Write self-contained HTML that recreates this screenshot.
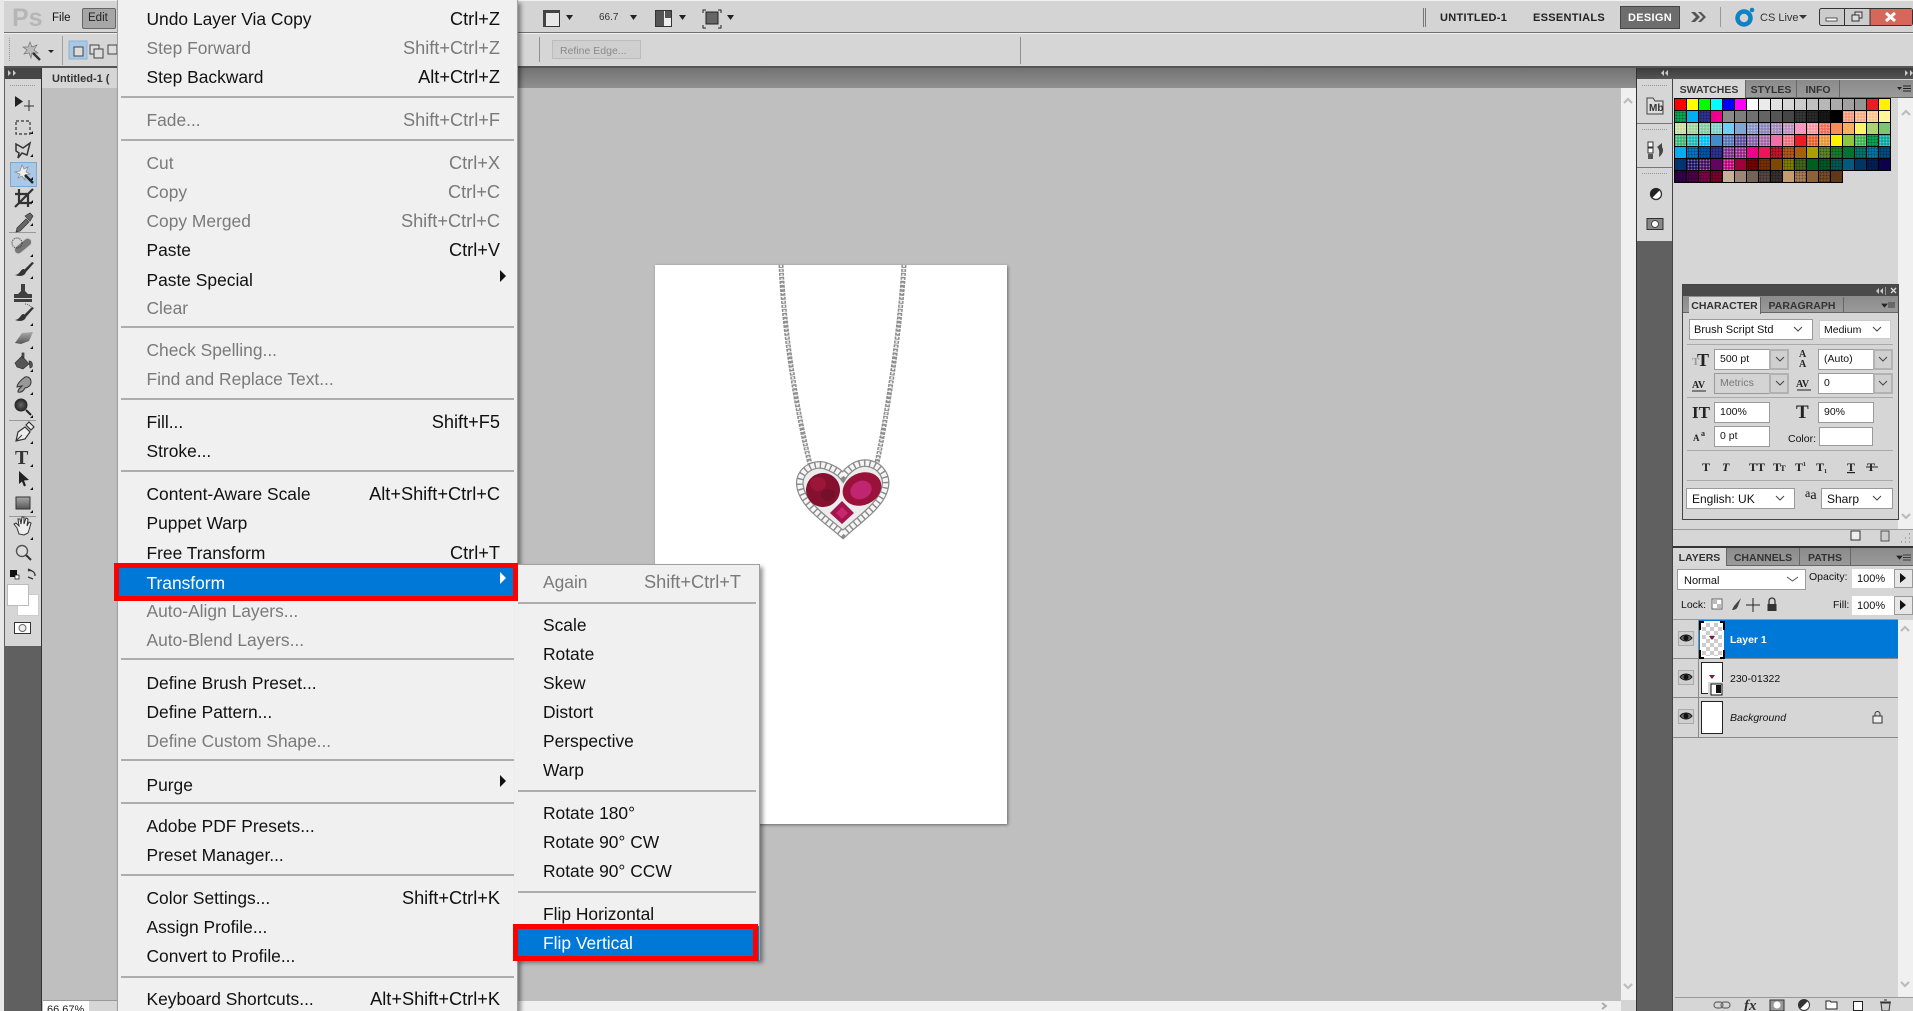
<!DOCTYPE html>
<html><head><meta charset="utf-8"><style>
html,body{margin:0;padding:0;width:1913px;height:1011px;overflow:hidden;background:#d6d6d6}
body{position:relative;font-family:"Liberation Sans",sans-serif;color:#111}
div,svg{position:absolute}
.t{position:absolute;white-space:nowrap;font-size:10.5px;line-height:14px}
#menu,#sub{background:#f0f0f0;box-shadow:3px 3px 4px rgba(0,0,0,.4);font-size:17.4px;color:#111}
.m{position:absolute;height:24px;line-height:24px;white-space:nowrap}
#menu .m{left:28.500px;right:17px}
#sub .m{left:28px;right:18px}
.m b{position:absolute;right:0;top:0;font-weight:normal;font-size:18.200px}
.x{color:#7a7a7a}
.s{position:absolute;height:2px;background:#adadad}
#menu .s{left:3px;right:3px}
#sub .s{left:3px;right:3px}
#sw{left:1675px;top:99px;width:217px;display:grid;grid-template-columns:repeat(18,11px);grid-auto-rows:11px;gap:1px;background:transparent}
#sw i{display:block;background-color:currentColor;box-shadow:0 0 0 1px #000}
#sw i.d{background-image:radial-gradient(rgba(0,0,0,.38) 35%,transparent 45%);background-size:3px 3px}
#sw i.l{background-image:radial-gradient(rgba(255,255,255,.4) 35%,transparent 45%);background-size:3px 3px}
.f{position:absolute;background:#fff;box-sizing:border-box;font-size:10.5px;line-height:19px;padding-left:5px;border:1px solid #9a9a9a;white-space:nowrap}
.ar{position:absolute;background:#d0d0d0;border:2px solid #b2b2b2;box-sizing:border-box}
.tab{position:absolute;font-size:10.5px;font-weight:bold;text-align:center;box-sizing:border-box;color:#333;border-right:1px solid #666}
.tb{background:linear-gradient(#8b8b8b,#9a9a9a)}
</style></head><body>

<!-- menu bar / options -->
<div style="left:0;top:0;width:1913px;height:33px;background:#d4d4d4;border-top:1px solid #f2f2f2;box-sizing:border-box"></div>
<div style="left:0;top:32px;width:1913px;height:1px;background:#707070"></div>
<div style="left:0;top:33px;width:1913px;height:1px;background:#f0f0f0"></div>
<div style="left:0;top:34px;width:1913px;height:32px;background:#d6d6d6"></div>
<div style="left:0;top:66px;width:1913px;height:2px;background:#555"></div>
<div style="left:0;top:0;width:4px;height:1011px;background:#e8e8e8"></div>

<div class="t" style="left:12px;top:4px;font-size:25px;line-height:28px;font-weight:bold;color:#b6b6b6">Ps</div>
<div class="t" style="left:52px;top:11px;font-size:11.5px">File</div>
<div style="left:82px;top:8px;width:32px;height:19px;background:#a6a6a6;border:1px solid #666;border-radius:2px"></div>
<div class="t" style="left:88px;top:11px;font-size:11.5px;color:#222">Edit</div>

<div class="t" style="left:599px;top:11px;font-size:10px;color:#333">66.7</div>
<div class="t" style="left:1440px;top:11px;font-size:11px;font-weight:bold;letter-spacing:.3px;color:#222">UNTITLED-1</div>
<div class="t" style="left:1533px;top:11px;font-size:11px;font-weight:bold;letter-spacing:.3px;color:#222">ESSENTIALS</div>
<div style="left:1620px;top:6px;width:60px;height:23px;background:#6d6d6d;border:1px solid #444;box-sizing:border-box"></div>
<div class="t" style="left:1628px;top:11px;font-size:11px;font-weight:bold;letter-spacing:.3px;color:#fff">DESIGN</div>
<div class="t" style="left:1760px;top:11px;font-size:11px;color:#333">CS Live</div>
<div style="left:552px;top:40px;width:89px;height:19px;background:#cfcfcf;border:1px solid #bcbcbc;box-sizing:border-box"></div>
<div class="t" style="left:560px;top:44px;font-size:10.5px;color:#8a8a8a">Refine Edge...</div>
<div style="left:539px;top:37px;width:1px;height:25px;background:#8f8f8f"></div>
<div style="left:1020px;top:37px;width:1px;height:27px;background:#8f8f8f"></div>
<div style="left:62px;top:36px;width:1px;height:29px;background:#a0a0a0"></div>

<!-- tab row + canvas -->
<div style="left:42px;top:68px;width:1595px;height:20px;background:linear-gradient(#727272,#909090)"></div>
<div style="left:42px;top:68px;width:90px;height:20px;background:#d6d6d6"></div>
<div class="t" style="left:52px;top:72px;font-size:11px;font-weight:bold;color:#333">Untitled-1 (</div>
<div style="left:42px;top:88px;width:1579px;height:923px;background:#bfbfbf"></div>
<div style="left:655px;top:265px;width:352px;height:559px;background:#fff;box-shadow:1px 1px 3px rgba(0,0,0,.45)"></div>
<div style="left:1621px;top:88px;width:16px;height:912px;background:#f0f0f0"></div>
<div style="left:1621px;top:1000px;width:16px;height:11px;background:#d4d4d4"></div>
<div style="left:518px;top:1001px;width:1103px;height:10px;background:#f0f0f0"></div>
<div style="left:43px;top:1000px;width:75px;height:11px;background:#d6d6d6;border-top:1px solid #999;box-sizing:border-box"></div>
<div style="left:43px;top:1001px;width:46px;height:10px;background:#fff"></div>
<div class="t" style="left:47px;top:1003px;font-size:11px;color:#222">66.67%</div>

<!-- left tools -->
<div style="left:4px;top:68px;width:37px;height:943px;background:#606060"></div>
<div style="left:5px;top:68px;width:36px;height:11px;background:#454545"></div>
<div style="left:5px;top:79px;width:36px;height:567px;background:#d6d6d6"></div>
<div style="left:41px;top:68px;width:1px;height:943px;background:#333"></div>
<div style="left:9px;top:232px;width:27px;height:1px;background:#999"></div>
<div style="left:9px;top:420px;width:27px;height:1px;background:#999"></div>
<div style="left:9px;top:516px;width:27px;height:1px;background:#999"></div>
<div style="left:10px;top:162px;width:25px;height:23px;background:#a9c8e6;border:1px solid #7fa7cf"></div>
<div style="left:8px;top:585px;width:20px;height:20px;background:#fff;box-shadow:0 0 0 1px #bbb;z-index:2"></div>
<div style="left:18px;top:595px;width:20px;height:20px;background:#fff;box-shadow:0 0 0 1px #ccc"></div>

<!-- right dock -->
<div style="left:1637px;top:68px;width:276px;height:11px;background:linear-gradient(#3b3b3b,#555)"></div>
<div style="left:1637px;top:79px;width:36px;height:932px;background:#606060"></div>
<div style="left:1637px;top:79px;width:36px;height:162px;background:#d6d6d6"></div>
<div style="left:1637px;top:123px;width:36px;height:1px;background:#777"></div>
<div style="left:1637px;top:167px;width:36px;height:1px;background:#777"></div>
<div style="left:1636px;top:68px;width:1px;height:943px;background:#333"></div>
<div style="left:1672px;top:79px;width:1px;height:932px;background:#444"></div>

<!-- swatches panel -->
<div style="left:1673px;top:79px;width:240px;height:467px;background:#d6d6d6"></div>
<div class="tb" style="left:1673px;top:80px;width:240px;height:18px;border-bottom:1px solid #666;box-sizing:border-box"></div>
<div class="tab" style="left:1673px;top:80px;width:73px;height:18px;line-height:21px;background:#d8d8d8;color:#3a3a3a">SWATCHES</div>
<div class="tab" style="left:1746px;top:80px;width:51px;height:17px;line-height:21px">STYLES</div>
<div class="tab" style="left:1797px;top:80px;width:43px;height:17px;line-height:21px">INFO</div>
<div style="left:1898px;top:98px;width:15px;height:431px;background:#f0f0f0"></div>
<div style="left:1673px;top:529px;width:240px;height:1px;background:#999"></div>
<div style="left:1673px;top:546px;width:240px;height:2px;background:#333"></div>

<div id="sw">
<i style="color:#f00"></i><i style="color:#ff0"></i><i style="color:#0f0"></i><i style="color:#0ff"></i><i style="color:#00f"></i><i style="color:#f0f"></i><i style="color:#fff"></i><i style="color:#ebebeb"></i><i style="color:#e1e1e1"></i><i style="color:#d7d7d7"></i><i style="color:#cbcbcb"></i><i style="color:#c0c0c0"></i><i style="color:#b7b7b7"></i><i style="color:#ababab"></i><i style="color:#a1a1a1"></i><i style="color:#959595"></i><i style="color:#ed1c24"></i><i style="color:#fff200"></i>
<i class="d" style="color:#00a651"></i><i style="color:#00aeef"></i><i class="d" style="color:#2e3192"></i><i style="color:#ec008c"></i><i style="color:#898989"></i><i style="color:#7d7d7d"></i><i style="color:#707070"></i><i style="color:#646464"></i><i style="color:#555"></i><i style="color:#464646"></i><i class="d" style="color:#363636"></i><i class="d" style="color:#2a2a2a"></i><i class="d" style="color:#181818"></i><i style="color:#000"></i><i class="l" style="color:#f7977a"></i><i class="l" style="color:#f9ad81"></i><i class="l" style="color:#fdc68a"></i><i style="color:#fff79a"></i>
<i class="l" style="color:#c4df9b"></i><i class="l" style="color:#a2d39c"></i><i class="l" style="color:#82ca9d"></i><i class="l" style="color:#7bcdc8"></i><i style="color:#6ecff6"></i><i style="color:#7ea7d8"></i><i class="l" style="color:#8493ca"></i><i class="l" style="color:#8882be"></i><i class="l" style="color:#a187be"></i><i class="l" style="color:#bc8dbf"></i><i style="color:#f49ac2"></i><i class="l" style="color:#f6989d"></i><i class="l" style="color:#f26c4f"></i><i style="color:#f68e55"></i><i style="color:#fbaf5c"></i><i style="color:#fff467"></i><i style="color:#acd372"></i><i style="color:#7cc576"></i>
<i class="l" style="color:#3bb878"></i><i class="l" style="color:#1abbb4"></i><i class="l" style="color:#00bff3"></i><i style="color:#438cca"></i><i class="l" style="color:#5574b9"></i><i class="l" style="color:#5c4ea0"></i><i class="l" style="color:#855fa8"></i><i class="l" style="color:#a763a8"></i><i style="color:#ee6ea7"></i><i class="l" style="color:#f26d7d"></i><i style="color:#ed1c24"></i><i class="l" style="color:#e85f2a"></i><i class="l" style="color:#e8952d"></i><i style="color:#fff200"></i><i style="color:#8dc63f"></i><i class="l" style="color:#39b54a"></i><i class="d" style="color:#00a651"></i><i class="l" style="color:#00a99d"></i>
<i style="color:#00aeef"></i><i class="d" style="color:#0076c0"></i><i class="d" style="color:#0054a6"></i><i class="d" style="color:#2e3192"></i><i class="l" style="color:#7b2e8e"></i><i class="l" style="color:#92278f"></i><i style="color:#ec008c"></i><i style="color:#ed145b"></i><i class="d" style="color:#c4122b"></i><i class="d" style="color:#b5561a"></i><i style="color:#a36209"></i><i style="color:#aba000"></i><i class="d" style="color:#598527"></i><i class="d" style="color:#1a7b30"></i><i style="color:#007236"></i><i class="d" style="color:#00746b"></i><i class="d" style="color:#0076a3"></i><i class="d" style="color:#004b80"></i>
<i style="color:#003471"></i><i class="l" style="color:#1b1464"></i><i class="l" style="color:#440e62"></i><i style="color:#630460"></i><i class="l" style="color:#c0007d"></i><i style="color:#9e0039"></i><i class="d" style="color:#790000"></i><i class="d" style="color:#7b2e00"></i><i style="color:#7d4900"></i><i class="d" style="color:#827b00"></i><i class="d" style="color:#406618"></i><i style="color:#005e20"></i><i class="d" style="color:#005826"></i><i class="d" style="color:#005952"></i><i style="color:#005b7f"></i><i style="color:#003663"></i><i class="d" style="color:#002157"></i><i style="color:#0d004c"></i>
<i class="d" style="color:#32004b"></i><i class="d" style="color:#4b0049"></i><i class="d" style="color:#7b0046"></i><i class="d" style="color:#7a0026"></i><i style="color:#c7b299"></i><i style="color:#998675"></i><i style="color:#736357"></i><i class="d" style="color:#534741"></i><i class="d" style="color:#362f2c"></i><i style="color:#c69c6d"></i><i class="d" style="color:#a67c52"></i><i style="color:#8c6239"></i><i class="d" style="color:#754c24"></i><i style="color:#603913"></i>
</div>

<!-- character panel -->
<div style="left:1682px;top:284px;width:217px;height:236px;background:#d6d6d6;border:1px solid #444;box-sizing:border-box"></div>
<div style="left:1683px;top:285px;width:215px;height:11px;background:#4a4a4a"></div>
<div class="tb" style="left:1683px;top:296px;width:215px;height:17px;border-bottom:1px solid #666;box-sizing:border-box"></div>
<div class="tab" style="left:1689px;top:297px;width:72px;height:17px;line-height:19px;background:#d8d8d8">CHARACTER</div>
<div class="tab" style="left:1761px;top:297px;width:83px;height:16px;line-height:19px">PARAGRAPH</div>
<div class="f" style="left:1689px;top:319px;width:124px;height:21px;font-size:11px;padding-left:4px;line-height:20px">Brush Script Std</div>
<div class="f" style="left:1819px;top:320px;width:72px;height:19px;line-height:18px;border-color:#ccc;padding-left:4px">Medium</div>
<div style="left:1687px;top:344px;width:206px;height:1px;background:#aaa"></div>
<div class="f" style="left:1714px;top:349px;width:56px;height:21px">500 pt</div><div class="ar" style="left:1769px;top:349px;width:20px;height:21px"></div>
<div class="f" style="left:1818px;top:349px;width:56px;height:21px">(Auto)</div><div class="ar" style="left:1873px;top:349px;width:20px;height:21px"></div>
<div class="f" style="left:1714px;top:373px;width:56px;height:21px;background:#d4d4d4;color:#777">Metrics</div><div class="ar" style="left:1769px;top:373px;width:20px;height:21px"></div>
<div class="f" style="left:1818px;top:373px;width:56px;height:21px">0</div><div class="ar" style="left:1873px;top:373px;width:20px;height:21px"></div>
<div style="left:1687px;top:397px;width:206px;height:1px;background:#aaa"></div>
<div class="f" style="left:1714px;top:402px;width:56px;height:21px">100%</div>
<div class="f" style="left:1818px;top:402px;width:56px;height:21px">90%</div>
<div class="f" style="left:1714px;top:426px;width:56px;height:21px">0 pt</div>
<div class="t" style="left:1788px;top:432px">Color:</div>
<div class="f" style="left:1819px;top:427px;width:54px;height:19px"></div>
<div style="left:1687px;top:450px;width:206px;height:1px;background:#aaa"></div>
<div style="left:1687px;top:480px;width:206px;height:1px;background:#aaa"></div>
<div class="f" style="left:1686px;top:488px;width:109px;height:21px;font-size:12px;line-height:20px">English: UK</div>
<div class="f" style="left:1821px;top:488px;width:72px;height:21px;font-size:12px;line-height:20px">Sharp</div>
<div class="t" style="left:1805px;top:488px;font-family:'Liberation Serif',serif;font-size:12px"><span style="position:relative;top:-2px">a</span><span style="font-size:14px">a</span></div>

<!-- layers -->
<div style="left:1673px;top:548px;width:240px;height:463px;background:#d6d6d6"></div>
<div class="tb" style="left:1673px;top:548px;width:240px;height:18px;border-bottom:1px solid #666;box-sizing:border-box"></div>
<div class="tab" style="left:1673px;top:548px;width:54px;height:18px;line-height:21px;background:#d8d8d8">LAYERS</div>
<div class="tab" style="left:1727px;top:548px;width:73px;height:17px;line-height:21px">CHANNELS</div>
<div class="tab" style="left:1800px;top:548px;width:51px;height:17px;line-height:21px">PATHS</div>
<div class="f" style="left:1677px;top:569px;width:129px;height:21px;padding-left:6px;font-size:11px;line-height:22px">Normal</div>
<div class="t" style="left:1809px;top:570px">Opacity:</div>
<div class="f" style="left:1852px;top:569px;width:42px;height:19px;line-height:20px;border:0;font-size:11px">100%</div>
<div style="left:1894px;top:569px;width:19px;height:19px;background:#e6e6e6;border:1px solid #999;box-sizing:border-box"></div>
<div class="t" style="left:1681px;top:598px">Lock:</div>
<div class="t" style="left:1833px;top:598px">Fill:</div>
<div class="f" style="left:1852px;top:596px;width:42px;height:19px;line-height:20px;border:0;font-size:11px">100%</div>
<div style="left:1894px;top:596px;width:19px;height:19px;background:#e6e6e6;border:1px solid #999;box-sizing:border-box"></div>
<div style="left:1673px;top:619px;width:225px;height:1px;background:#999"></div>
<div style="left:1698px;top:620px;width:200px;height:38px;background:#0078d7"></div>
<div style="left:1698px;top:620px;width:1px;height:117px;background:#8a8a8a"></div>
<div style="left:1673px;top:658px;width:225px;height:1px;background:#8a8a8a"></div>
<div style="left:1673px;top:697px;width:225px;height:1px;background:#8a8a8a"></div>
<div style="left:1673px;top:737px;width:225px;height:1px;background:#8a8a8a"></div>
<div style="left:1898px;top:620px;width:15px;height:378px;background:#f0f0f0"></div>
<div style="left:1675px;top:997px;width:238px;height:1px;background:#999"></div>
<div style="left:1700px;top:621px;width:24px;height:37px;background:#fff"></div>
<div style="left:1702px;top:623px;width:20px;height:33px;background:repeating-conic-gradient(#ccc 0 25%,#fff 0 50%) 0 0/8px 8px"></div>
<div style="left:1702px;top:663px;width:20px;height:30px;background:#fff;box-shadow:0 0 0 1px #222"></div>
<div style="left:1702px;top:702px;width:20px;height:31px;background:#fff;box-shadow:0 0 0 1px #222"></div>
<div class="t" style="left:1730px;top:633px;font-weight:bold;color:#fff">Layer 1</div>
<div class="t" style="left:1730px;top:672px">230-01322</div>
<div class="t" style="left:1730px;top:711px;font-style:italic">Background</div>

<!-- icons -->
<svg width="1913" height="1011" viewBox="0 0 1913 1011" style="left:0;top:0;z-index:3">
<defs>
<linearGradient id="g1" x1="0" y1="0" x2="0" y2="1"><stop offset="0" stop-color="#aaa"/><stop offset="1" stop-color="#555"/></linearGradient>
<radialGradient id="g2"><stop offset="0" stop-color="#666"/><stop offset="1" stop-color="#222"/></radialGradient>
</defs>

<!-- necklace -->
<g fill="none" stroke-linecap="butt">
<path d="M781 265C784 330 796 410 811 468" stroke="#8f8f8f" stroke-width="5" stroke-dasharray="3 1"/>
<path d="M781 265C784 330 796 410 811 468" stroke="#eee" stroke-width="2" stroke-dasharray="2 2.500"/>
<path d="M904 265C900 330 888 410 876 468" stroke="#8f8f8f" stroke-width="5" stroke-dasharray="3 1"/>
<path d="M904 265C900 330 888 410 876 468" stroke="#eee" stroke-width="2" stroke-dasharray="2 2.500"/>
</g>
<g transform="translate(843,497) scale(.96) translate(-843,-497)">
<path id="h" d="M843 536C825 520 800 505 798 484C797 468 815 460 826 465C834 468 840 472 843 476C848 468 858 460 870 462C883 465 889 476 887 486C884 505 860 520 843 536Z" fill="#ececec" stroke="#8a8a8a" stroke-width="8"/>
<path d="M843 536C825 520 800 505 798 484C797 468 815 460 826 465C834 468 840 472 843 476C848 468 858 460 870 462C883 465 889 476 887 486C884 505 860 520 843 536Z" fill="none" stroke="#f6f6f6" stroke-width="5.500" stroke-dasharray="4 1.500"/>
</g>
<ellipse cx="823" cy="490" rx="17" ry="17" fill="#861030" transform="rotate(30 823 490)"/>
<ellipse cx="818" cy="484" rx="8" ry="7" fill="#9c1638"/>
<ellipse cx="828" cy="495" rx="7" ry="6" fill="#741029"/>
<ellipse cx="862" cy="489" rx="20" ry="16" fill="#9a1239" transform="rotate(-25 862 489)"/>
<ellipse cx="861" cy="490" rx="11" ry="9" fill="#c02670" transform="rotate(-25 861 490)"/>
<path d="M842 501L854 513 842 524 830 513Z" fill="#a5144a"/>
<path d="M842 507L848 513 842 519 836 513Z" fill="#c8276f"/>

<!-- options bar -->
<path d="M9.500 38v24" stroke="#999" stroke-dasharray="1 1"/>
<g transform="translate(30,50)" fill="none"><path d="M0-8l2 5 5-2-3 5 4 3-6 0-1 5-2-5-5 1 3-4-4-3 5 0z" fill="#bbb" stroke="#777" stroke-width=".7"/><path d="M3 3l7 7" stroke="#333" stroke-width="2.400"/></g>
<path d="M48 50h6l-3 3z" fill="#222"/>
<rect x="69" y="41" width="18" height="18" fill="#a9c8e6" stroke="#8db3d8"/>
<rect x="74" y="47" width="9" height="9" fill="#ddd" stroke="#444"/>
<rect x="90" y="45" width="9" height="9" fill="#ddd" stroke="#444"/><rect x="94" y="49" width="9" height="9" fill="#ddd" stroke="#444"/>
<rect x="108" y="45" width="9" height="9" fill="#ddd" stroke="#444"/>

<!-- app bar center -->
<rect x="543.500" y="10.500" width="16" height="16" fill="#e8e8e8" stroke="#333"/><rect x="543" y="10" width="17" height="3" fill="#444"/><rect x="543" y="10" width="3" height="17" fill="#444"/>
<rect x="655.500" y="10.500" width="16" height="16" fill="#eee" stroke="#333"/><rect x="656" y="11" width="8" height="15" fill="#555"/><rect x="665" y="11" width="6" height="7" fill="#555"/>
<rect x="706" y="12" width="12" height="12" fill="#666" stroke="#222"/><path d="M703 13v-3h3M718 10h3v3M721 25v3h-3M706 28h-3v-3" fill="none" stroke="#222"/>
<path d="M566 15h7l-3.500 5zM630 15h7l-3.500 5zM679 15h7l-3.500 5zM727 15h7l-3.500 5z" fill="#222"/>

<!-- app bar right -->
<path d="M1423.500 8v19M1425.500 8v19" stroke="#777"/>
<path d="M1691 12l5 5-5 5h4l5-5-5-5zM1698 12l5 5-5 5h3l5-5-5-5z" fill="#555"/>
<path d="M1720.500 7v20" stroke="#999"/>
<circle cx="1744" cy="18" r="6.500" fill="none" stroke="#0f82c4" stroke-width="4.500"/><circle cx="1752" cy="10" r="2.300" fill="#0f82c4"/>
<path d="M1799 15h8l-4 4z" fill="#333"/>
<g><rect x="1819.500" y="8.500" width="93" height="17" rx="2" fill="#ccc" stroke="#333"/><rect x="1870" y="9" width="42" height="16" fill="#d8675b"/><path d="M1844.500 9v16M1870 9v16" stroke="#333"/>
<rect x="1826" y="18" width="11" height="3" fill="#fff" stroke="#333" stroke-width=".8"/><rect x="1855" y="12" width="7" height="6" fill="#ddd" stroke="#333"/><rect x="1852" y="15" width="7" height="6" fill="#ddd" stroke="#333"/><path d="M1886 13l9 8M1895 13l-9 8" stroke="#fff" stroke-width="3"/></g>

<!-- toolbar header -->
<path d="M8 70l3 3-3 3zM13 70l3 3-3 3z" fill="#ccc"/>
<path d="M10 85.500h26" stroke="#999" stroke-dasharray="1 1"/>
<!-- tools -->
<g transform="translate(23,103)"><path d="M-8-7V4l8-5.500z" fill="#222"/><path d="M6-3v11M1 3h10" stroke="#333" fill="none"/></g>
<rect x="16" y="121" width="14" height="13" fill="none" stroke="#333" stroke-width="1.200" stroke-dasharray="3 2"/>
<path d="M16 144l7 4 7-5-3 12-5-2-4 5 1-5-3-2z" fill="none" stroke="#333" stroke-width="1.500"/>
<g transform="translate(22,172)"><path d="M0-7l2 4 4-2-2 5 4 2-5 1 0 5-3-4-4 2 2-4-5-2 5-1z" fill="#eee" stroke="#888" stroke-width=".7"/><path d="M3 3l8 8" stroke="#222" stroke-width="2.500"/></g>
<path d="M19 189v14h13M15 194h13v13M15 207l18-18" fill="none" stroke="#333" stroke-width="2.200"/>
<path d="M17 228l9-9 3 3-9 9-4 1zM25 216l5-3 3 3-3 5z" fill="#666" stroke="#333" stroke-width=".7"/>
<g transform="rotate(-40 23 246)"><rect x="13" y="242" width="20" height="8" rx="4" fill="#777" stroke="#ccc"/></g><circle cx="17" cy="243" r="5" fill="none" stroke="#333" stroke-dasharray="1 1"/>
<path d="M32 262l-8 8 2 2 8-9zM24 269c-4 0-3 5-9 6 5 2 10 1 11-3z" fill="#333"/>
<path d="M21 284h4v7l3 3h4v4H14v-4h4l3-3zM14 299h18v3H14z" fill="#3f3f3f"/>
<path d="M32 307l-8 8 2 2 8-9zM24 314c-4 0-3 5-9 6 5 2 10 1 11-3z" fill="#333"/><path d="M25 304a9 9 0 0 1 7 4" fill="none" stroke="#555" stroke-dasharray="1 1"/>
<path d="M15 343l7-10 11-1-4 9-8 3z" fill="url(#g1)"/>
<path d="M15 363l7-7 7 8-6 5-6-2zM22 353h2v5h-2zM29 361c3 0 4 3 3 6l-2 1z" fill="#555" stroke="#333" stroke-width=".7"/>
<path d="M18 392c0-3 2-4 4-6l-5 1c0-3 4-7 8-10 4-1 6 2 6 5 0 4-4 6-6 6-1 2-3 5-7 4z" fill="#999" stroke="#333"/>
<circle cx="21" cy="405" r="6.500" fill="url(#g2)"/><path d="M26 410l5 5" stroke="#222" stroke-width="2"/>
<path d="M16 441l2-9 7-5 5 5-5 7zM26 425l3-3 5 5-3 3z" fill="#eee" stroke="#333" stroke-width="1.200"/>
<path d="M16 441l6-6" stroke="#333"/>
<text x="15" y="464" font-family="Liberation Serif,serif" font-size="20" font-weight="bold" fill="#333">T</text>
<path d="M19 484v-13l10 9-5 .5 2 5-2 1-2-5z" fill="#222"/>
<rect x="16" y="497" width="14" height="12" fill="url(#g1)" stroke="#333"/>
<path d="M17 528l-3-4 2-1 3 3-1-7 2 0 1 5 1-7 2 0 0 7 2-6 2 1-1 7 2-4 2 1-2 7-1 3-4 2-5-1z" fill="#eee" stroke="#333"/>
<circle cx="22" cy="551" r="5.500" fill="#ddd" stroke="#555" stroke-width="1.400"/><path d="M26 555l5 5" stroke="#333" stroke-width="2"/>
<path d="M10 570h7v7h-7z" fill="#111"/><path d="M15 575h4v4h-4z" fill="#fff" stroke="#111" stroke-width=".7"/>
<path d="M28 569l4 2m-4 6 5 2M28 571a5 5 0 0 1 7 5" fill="none" stroke="#333" stroke-width="1.300"/>
<rect x="14.500" y="622.500" width="16" height="11" fill="#fff" stroke="#333"/><circle cx="22.500" cy="628" r="3.500" fill="#eee" stroke="#666"/>
<!-- corner triangles -->
<path d="M33 134v-3l-3 3zM33 157v-3l-3 3zM33 180v-3l-3 3zM33 203v-3l-3 3zM33 226v-3l-3 3zM33 257v-3l-3 3zM33 279v-3l-3 3zM33 326v-3l-3 3zM33 349v-3l-3 3zM33 372v-3l-3 3zM33 395v-3l-3 3zM33 418v-3l-3 3zM33 444v-3l-3 3zM33 467v-3l-3 3zM33 490v-3l-3 3zM33 513v-3l-3 3zM33 540v-3l-3 3z" fill="#111"/>

<!-- dock -->
<path d="M1664 70l-3 3 3 3zM1668 70l-3 3 3 3zM1905 70l3 3-3 3zM1910 70l3 3-3 3z" fill="#ccc"/>
<path d="M1642 85.500h25M1642 129.500h25M1642 173.500h25" stroke="#999" stroke-dasharray="1 1"/>
<path d="M1647 98h6l2 3h8v13h-16z" fill="#ddd" stroke="#444"/><text x="1649" y="111" font-family="Liberation Sans,sans-serif" font-size="10" font-weight="bold" fill="#333">Mb</text>
<rect x="1648" y="142" width="5" height="5" fill="#fff" stroke="#333"/><rect x="1648" y="148" width="5" height="5" fill="#fff" stroke="#333"/><rect x="1648" y="154" width="5" height="5" fill="#555"/><path d="M1657 147l5-4v4c2 3 1 7-3 10 0-3 1-6-1-9z" fill="#444"/>
<circle cx="1656" cy="194" r="5.500" fill="#fff" stroke="#333" stroke-width="1.300"/><path d="M1652 198l8-8a5.500 5.500 0 0 0-8 8z" fill="#222"/>
<rect x="1647" y="218.500" width="16" height="11" fill="#888" stroke="#333"/><circle cx="1655" cy="224" r="3.500" fill="#fff" stroke="#444"/>

<!-- swatch panel menu -->
<path d="M1897 87h5l-2.500 3z" fill="#222"/><path d="M1903 86h8M1903 88.500h8M1903 91h8" stroke="#222"/>
<!-- scroll arrows -->
<path d="M1624 103l4-4 4 4M1902 115l4-4 4 4M1902 514l4 4 4-4M1624 984l4 4 4-4M1901 982l4 4 4-4M1901 631l4-4 4 4" fill="none" stroke="#bcbcbc" stroke-width="2.200"/>
<path d="M1602 1003l4 3-4 3" fill="none" stroke="#aaa" stroke-width="1.800"/>
<!-- char panel title -->
<path d="M1879 288l-3 3 3 3zM1883 288l-3 3 3 3z" fill="#ccc"/><path d="M1885.500 287v8" stroke="#999"/><path d="M1891 288l5 5M1896 288l-5 5" stroke="#ddd" stroke-width="1.300"/>
<path d="M1882 304h5l-2.500 3zM1888 303h7M1888 305h7M1888 307h7" fill="#222" stroke="#222" stroke-width=".8"/>
<path d="M1794 327l4 4 4-4M1873 327l4 4 4-4M1776 357l4 4 4-4M1879 357l4 4 4-4M1776 381l4 4 4-4M1879 381l4 4 4-4M1776 496l4 4 4-4M1873 496l4 4 4-4" fill="none" stroke="#444"/>
<g font-family="Liberation Serif,serif" font-weight="bold" fill="#222">
<text x="1692" y="365" font-size="11" fill="#999">T</text><text x="1697" y="366" font-size="18">T</text>
<text x="1799" y="357" font-size="10">A</text><text x="1799" y="367" font-size="10">A</text>
<text x="1692" y="388" font-size="10">AV</text><text x="1796" y="387" font-size="10">AV</text>
<text x="1692" y="418" font-size="17">IT</text><text x="1796" y="418" font-size="19">T</text>
<text x="1693" y="441" font-size="9">A</text><text x="1701" y="436" font-size="8">a</text>
<text x="1702" y="471" font-size="12">T</text>
<text x="1722" y="471" font-size="12" font-style="italic">T</text>
<text x="1749" y="471" font-size="12">TT</text>
<text x="1773" y="471" font-size="12">T</text><text x="1780" y="471" font-size="8.500">T</text>
<text x="1795" y="471" font-size="12">T</text><text x="1803" y="466" font-size="6">1</text>
<text x="1816" y="471" font-size="12">T</text><text x="1824" y="473" font-size="6">1</text>
<text x="1847" y="471" font-size="12" text-decoration="underline">T</text>
<text x="1867" y="471" font-size="12">T</text></g><path d="M1866 467h12" stroke="#222"/>
<path d="M1797 390h14M1692 391h14" stroke="#222"/>
<rect x="1851" y="531" width="9" height="9" fill="#eee" stroke="#333"/><rect x="1881" y="531" width="8" height="10" fill="#ccc" stroke="#555"/>
<path d="M1901 542h1M1905 542h1M1909 542h1M1905 538h1M1909 538h1M1909 534h1" stroke="#777"/>

<!-- layers icons -->
<path d="M1897 556h5l-2.500 3zM1903 555h8M1903 557.500h8M1903 560h8" fill="#222" stroke="#222" stroke-width=".8"/>
<path d="M1787 577l5.500 4 5.500-4" fill="none" stroke="#555"/>
<path d="M1900 573v10l6-5zM1900 600v10l6-5z" fill="#111"/>
<rect x="1712" y="599" width="10" height="10" fill="#fff" stroke="#666"/><path d="M1713 600h4v4h-4zM1717 604h4v4h-4z" fill="#bbb"/>
<path d="M1741 598l-7 8-2 4c3 0 5-1 6-4z" fill="#444"/>
<path d="M1753 598v14M1746 605h14" stroke="#222"/>
<rect x="1767.500" y="604" width="9" height="7" fill="#333"/><path d="M1769 604v-3a3 3 0 0 1 6 0v3" fill="none" stroke="#333" stroke-width="1.300"/>
<rect x="1678.500" y="631.500" width="15" height="14" fill="#cfcfcf" stroke="#aaa"/><path d="M1680 638c3-4 9-4 12 0-3 4-9 4-12 0z" fill="#666" stroke="#111"/><circle cx="1686" cy="638" r="2.500" fill="#111"/>
<rect x="1678.500" y="670.500" width="15" height="14" fill="#cfcfcf" stroke="#aaa"/><path d="M1680 677c3-4 9-4 12 0-3 4-9 4-12 0z" fill="#666" stroke="#111"/><circle cx="1686" cy="677" r="2.500" fill="#111"/>
<rect x="1678.500" y="709.500" width="15" height="14" fill="#cfcfcf" stroke="#aaa"/><path d="M1680 716c3-4 9-4 12 0-3 4-9 4-12 0z" fill="#666" stroke="#111"/><circle cx="1686" cy="716" r="2.500" fill="#111"/>
<path d="M1700 630v-8h4M1720 622h4v8M1700 650v8h4M1720 658h4v-8" fill="none" stroke="#000" stroke-width="2"/>
<path d="M1709 636h6l-3 4zM1709 675h6l-3 4z" fill="#7c1c34"/>
<rect x="1708" y="682" width="15" height="14" fill="#d6d6d6"/><rect x="1711" y="684" width="11" height="11" fill="#fff" stroke="#111"/><path d="M1716 685h5v8h-5z" fill="#111"/>
<rect x="1873" y="716" width="9" height="7" fill="#eee" stroke="#333"/><path d="M1875 716v-2a2.500 2.500 0 0 1 5 0v2" fill="none" stroke="#333"/>
<g fill="none" stroke="#666" stroke-width="1.200"><rect x="1714" y="1002" width="9" height="6" rx="3"/><rect x="1721" y="1002" width="9" height="6" rx="3"/></g>
<text x="1744" y="1010" font-family="Liberation Serif,serif" font-style="italic" font-weight="bold" font-size="15" fill="#333">fx</text>
<rect x="1770" y="1000" width="14" height="11" fill="#999" stroke="#333"/><circle cx="1777" cy="1005" r="3.500" fill="#fff"/>
<circle cx="1804" cy="1005" r="5.500" fill="#fff" stroke="#333"/><path d="M1800 1009l8-8a5.500 5.500 0 0 0-8 8z" fill="#333"/>
<path d="M1826 1001h4l1 1h6v7h-11z" fill="#fff" stroke="#222"/>
<rect x="1853.500" y="1001.500" width="9" height="9" fill="#fff" stroke="#222"/>
<path d="M1881 1003h9l-1 8h-7z" fill="#ccc" stroke="#333"/><path d="M1880 1002h11M1884 1000h3" stroke="#333"/>
</svg>

<!-- main menu -->
<div id="menu" style="left:117px;top:0;width:401px;height:1011px;border-left:1px solid #a0a0a0;border-right:1px solid #a0a0a0;box-sizing:border-box;z-index:5">
<div class="m" style="top:7px">Undo Layer Via Copy<b>Ctrl+Z</b></div>
<div class="m x" style="top:36px">Step Forward<b>Shift+Ctrl+Z</b></div>
<div class="m" style="top:65px">Step Backward<b>Alt+Ctrl+Z</b></div>
<div class="s" style="top:96px"></div>
<div class="m x" style="top:108px">Fade...<b>Shift+Ctrl+F</b></div>
<div class="s" style="top:139px"></div>
<div class="m x" style="top:151px">Cut<b>Ctrl+X</b></div>
<div class="m x" style="top:180px">Copy<b>Ctrl+C</b></div>
<div class="m x" style="top:209px">Copy Merged<b>Shift+Ctrl+C</b></div>
<div class="m" style="top:238px">Paste<b>Ctrl+V</b></div>
<div class="m" style="top:268px">Paste Special</div>
<div class="m x" style="top:296px">Clear</div>
<div class="s" style="top:326px"></div>
<div class="m x" style="top:338px">Check Spelling...</div>
<div class="m x" style="top:367px">Find and Replace Text...</div>
<div class="s" style="top:398px"></div>
<div class="m" style="top:410px">Fill...<b>Shift+F5</b></div>
<div class="m" style="top:439px">Stroke...</div>
<div class="s" style="top:470px"></div>
<div class="m" style="top:482px">Content-Aware Scale<b>Alt+Shift+Ctrl+C</b></div>
<div class="m" style="top:511px">Puppet Warp</div>
<div class="m" style="top:541px">Free Transform<b>Ctrl+T</b></div>
<div style="position:absolute;left:-3px;top:564px;width:402px;height:36px;background:#0078d7;box-sizing:border-box"></div>
<div class="m" style="top:571px;color:#fff">Transform</div>
<div class="m x" style="top:599px">Auto-Align Layers...</div>
<div class="m x" style="top:628px">Auto-Blend Layers...</div>
<div class="s" style="top:658px"></div>
<div class="m" style="top:671px">Define Brush Preset...</div>
<div class="m" style="top:700px">Define Pattern...</div>
<div class="m x" style="top:729px">Define Custom Shape...</div>
<div class="s" style="top:759px"></div>
<div class="m" style="top:773px">Purge</div>
<div class="s" style="top:802px"></div>
<div class="m" style="top:814px">Adobe PDF Presets...</div>
<div class="m" style="top:843px">Preset Manager...</div>
<div class="s" style="top:874px"></div>
<div class="m" style="top:886px">Color Settings...<b>Shift+Ctrl+K</b></div>
<div class="m" style="top:915px">Assign Profile...</div>
<div class="m" style="top:944px">Convert to Profile...</div>
<div class="s" style="top:976px"></div>
<div class="m" style="top:987px">Keyboard Shortcuts...<b>Alt+Shift+Ctrl+K</b></div>
</div>

<!-- sub menu -->
<div id="sub" style="left:515px;top:564px;width:245px;height:396px;border:1px solid #a0a0a0;border-left:0;box-sizing:border-box;z-index:6">
<div class="m x" style="top:5px">Again<b>Shift+Ctrl+T</b></div>
<div class="s" style="top:37px"></div>
<div class="m" style="top:48px">Scale</div>
<div class="m" style="top:77px">Rotate</div>
<div class="m" style="top:106px">Skew</div>
<div class="m" style="top:135px">Distort</div>
<div class="m" style="top:164px">Perspective</div>
<div class="m" style="top:193px">Warp</div>
<div class="s" style="top:225px"></div>
<div class="m" style="top:236px">Rotate 180°</div>
<div class="m" style="top:265px">Rotate 90° CW</div>
<div class="m" style="top:294px">Rotate 90° CCW</div>
<div class="s" style="top:326px"></div>
<div class="m" style="top:337px">Flip Horizontal</div>
<div style="position:absolute;left:0;top:361px;width:244px;height:35px;background:#0078d7;box-sizing:border-box"></div>
<div class="m" style="top:366px;color:#fff">Flip Vertical</div>
</div>

<!-- red highlight boxes -->
<div style="left:114px;top:563px;width:404px;height:38px;border:5px solid #f00;box-sizing:border-box;z-index:7"></div>
<div style="left:513px;top:924px;width:245px;height:37px;border:5px solid #f00;box-sizing:border-box;z-index:7"></div>

<svg width="1913" height="1011" viewBox="0 0 1913 1011" style="left:0;top:0;z-index:8">
<path d="M500 270l6 6-6 6zM500 775l6 6-6 6z" fill="#111"/>
<path d="M500 572l6 6-6 6z" fill="#fff"/>
</svg>
</body></html>
